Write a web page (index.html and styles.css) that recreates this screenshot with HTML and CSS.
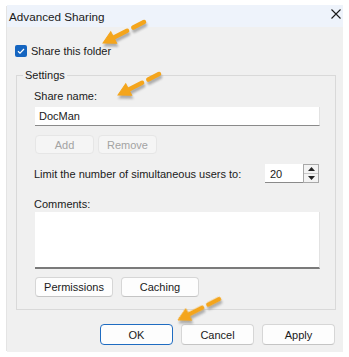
FILE: index.html
```html
<!DOCTYPE html>
<html>
<head>
<meta charset="utf-8">
<link rel="stylesheet" href="styles.css">
</head>
<body>
<div class="dialog">
  <div class="titlebar">
    <span class="title">Advanced Sharing</span>
    <svg class="close" width="10" height="10" viewBox="0 0 10 10"><path d="M0.5 0.5 L9.5 9.5 M9.5 0.5 L0.5 9.5" stroke="#1a1a1a" stroke-width="1.1" fill="none"/></svg>
  </div>
  <div class="body">
    <label class="check-row">
      <span class="checkbox"><svg width="12" height="12" viewBox="0 0 12 12"><path d="M3 6.2 L5 8.1 L9 4" stroke="#fff" stroke-width="1.2" fill="none"/></svg></span>
      <span>Share this folder</span>
    </label>
    <fieldset class="group">
      <legend>Settings</legend>
      <div class="label">Share name:</div>
      <div class="textbox">DocMan</div>
      <div class="btn-row">
        <span class="btn small disabled">Add</span>
        <span class="btn small disabled">Remove</span>
      </div>
      <div class="limit-row">
        <span>Limit the number of simultaneous users to:</span>
        <div class="spin">
          <div class="spin-value">20</div>
          <div class="spin-btns">
            <span class="spin-up"><svg width="7" height="4" viewBox="0 0 7 4"><path d="M0 4 L3.5 0 L7 4 Z" fill="#222"/></svg></span>
            <span class="spin-down"><svg width="7" height="4" viewBox="0 0 7 4"><path d="M0 0 L3.5 4 L7 0 Z" fill="#222"/></svg></span>
          </div>
        </div>
      </div>
      <div class="label comments-label">Comments:</div>
      <div class="textarea"></div>
      <div class="btn-row bottom">
        <span class="btn wide">Permissions</span>
        <span class="btn wide">Caching</span>
      </div>
    </fieldset>
    <div class="footer">
      <span class="btn foot default">OK</span>
      <span class="btn foot">Cancel</span>
      <span class="btn foot">Apply</span>
    </div>
  </div>
</div>
<svg class="arrows" width="349" height="357" viewBox="0 0 349 357">
  <defs>
    <filter id="blur" x="-20%" y="-50%" width="140%" height="200%"><feGaussianBlur stdDeviation="1.3"/></filter>
    <g id="arrow">
      <polygon points="0,0 12,-6.5 12,6.5"/>
      <line x1="10" y1="0" x2="27" y2="0" stroke-width="4.5" stroke-linecap="round"/>
      <line x1="34" y1="0" x2="46" y2="0" stroke-width="4.5" stroke-linecap="round"/>
    </g>
  </defs>
  <g fill="#777" stroke="#777" opacity="0.55" filter="url(#blur)">
    <use href="#arrow" transform="translate(104,46) rotate(-27)"/>
    <use href="#arrow" transform="translate(119,98) rotate(-27)"/>
    <use href="#arrow" transform="translate(179,323) rotate(-27)"/>
  </g>
  <g fill="#f4a51c" stroke="#f4a51c">
    <use href="#arrow" transform="translate(103,43) rotate(-27)"/>
    <use href="#arrow" transform="translate(118,95) rotate(-27)"/>
    <use href="#arrow" transform="translate(178,320) rotate(-27)"/>
  </g>
</svg>
</body>
</html>
```
FILE: styles.css
```css
html, body {
  margin: 0;
  padding: 0;
  background: #ffffff;
}
body {
  position: relative;
  width: 349px;
  height: 357px;
  overflow: hidden;
  font-family: "Liberation Sans", Arial, sans-serif;
  font-size: 11px;
  color: #1a1a1a;
  white-space: nowrap;
}
.dialog {
  margin: 5px 0 0 7px;
  width: 336px;
  height: 347px;
  background: #f0f0f0;
  box-shadow: -2px 0 0 -1px #e4e4e4;
}
.titlebar {
  height: 22px;
  background: #eef3fb;
  display: flex;
  align-items: center;
  justify-content: space-between;
  padding: 0 2px 0 2px;
}
.title {
  font-size: 11.7px;
  color: #1a1a1a;
}
.close {
  margin-bottom: 5px;
}
.body {
  display: flex;
  flex-direction: column;
}
.check-row {
  display: flex;
  align-items: center;
  gap: 4px;
  margin: 18px 0 0 8px;
  height: 12px;
}
.checkbox {
  width: 12px;
  height: 12px;
  border-radius: 2px;
  background: #1565c0;
  display: flex;
}
.group {
  margin: 11px 0 0 9px;
  width: 320px;
  box-sizing: border-box;
  height: 242px;
  border: 1px solid #d9d9d9;
  padding: 7px 15px 0 17px;
  display: flex;
  flex-direction: column;
}
.group legend {
  padding: 0 2px;
  margin-left: -11px;
  line-height: 14px;
}
.label {
  line-height: 15px;
}
.textbox {
  margin-top: 3px;
  height: 19px;
  box-sizing: border-box;
  background: #fff;
  border-bottom: 1px solid #8a8a8a;
  border-right: 1px solid #e2e2e2;
  padding: 2px 0 0 4px;
  line-height: 15px;
  margin-left: 1px;
}
.btn {
  display: flex;
  align-items: center;
  justify-content: center;
  box-sizing: border-box;
  background: #fdfdfd;
  border: 1px solid #d6d6d6;
  border-bottom-color: #c4c4c4;
  border-radius: 4px;
  color: #1a1a1a;
}
.btn-row {
  display: flex;
  gap: 4px;
  margin: 9px 0 0 1px;
}
.btn.small {
  width: 59px;
  height: 19px;
}
.btn.disabled {
  background: #f5f5f5;
  border-color: #e6e6e6;
  color: #a3a3a3;
}
.limit-row {
  display: flex;
  align-items: center;
  justify-content: space-between;
  margin-top: 10px;
  height: 19px;
}
.spin {
  display: flex;
  height: 19px;
  margin-right: 1px;
}
.spin-value {
  width: 38px;
  box-sizing: border-box;
  background: #fff;
  border-bottom: 1px solid #8a8a8a;
  padding: 3px 0 0 5px;
  line-height: 15px;
}
.spin-btns {
  width: 16px;
  box-sizing: border-box;
  border: 1px solid #a8a8a8;
  display: flex;
  flex-direction: column;
  background: #f3f3f3;
}
.spin-up, .spin-down {
  flex: 1;
  display: flex;
  align-items: center;
  justify-content: center;
}
.spin-up {
  border-bottom: 1px solid #c8c8c8;
}
.comments-label {
  margin-top: 14px;
}
.textarea {
  margin: 0 0 0 1px;
  height: 57px;
  box-sizing: border-box;
  background: #fff;
  border-right: 1px solid #e2e2e2;
  border-bottom: 2px solid #7a7a7a;
}
.btn-row.bottom {
  margin-top: 8px;
  gap: 8px;
}
.btn.wide {
  width: 78px;
  height: 20px;
}
.footer {
  display: flex;
  gap: 8px;
  margin: 14px 0 0 93px;
}
.btn.foot {
  width: 73px;
  height: 21px;
}
.btn.default {
  border: 1px solid #1f6cc1;
}
.arrows {
  position: absolute;
  left: 0;
  top: 0;
  pointer-events: none;
}
```
